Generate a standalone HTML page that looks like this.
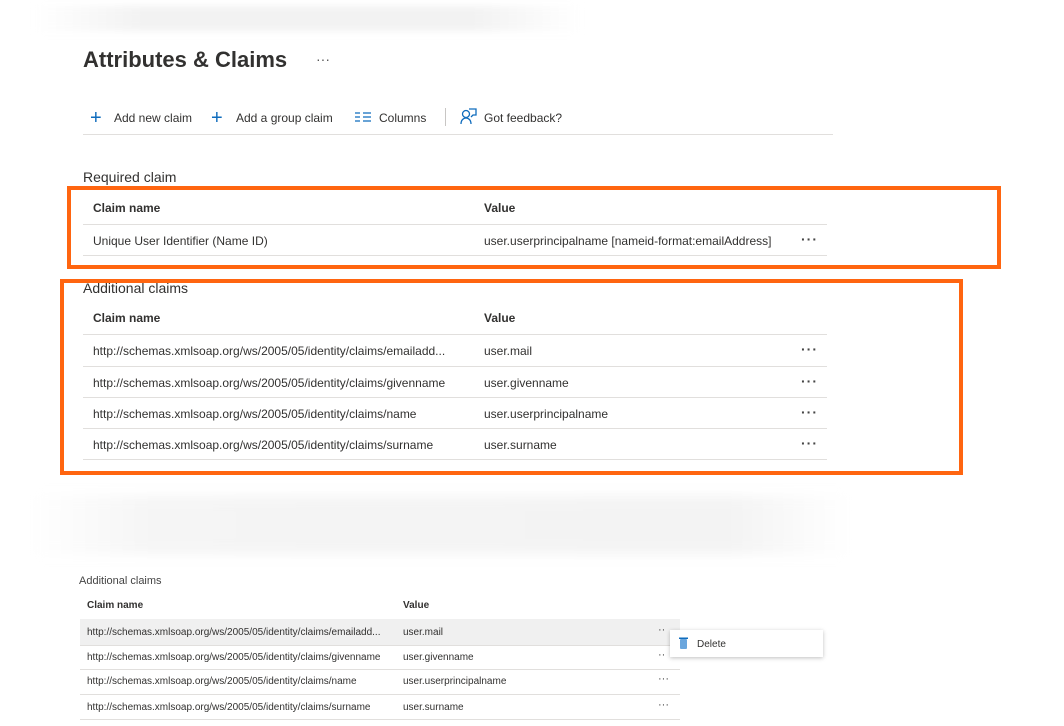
<!DOCTYPE html>
<html><head><meta charset="utf-8"><style>
*{margin:0;padding:0;box-sizing:border-box}
body{width:1064px;height:726px;background:#fff;position:relative;overflow:hidden;font-family:"Liberation Sans",sans-serif;color:#323130}
.a{position:absolute;white-space:nowrap}
.t{font-size:12px;line-height:14px}
.h{font-size:12px;font-weight:bold;line-height:14px}
.ln{position:absolute;height:1px;background:#e1dfdd}
.ob{position:absolute;border:4px solid #ff6510}
.dots{font-size:14px;letter-spacing:1px;font-weight:bold;color:#444}
.s{font-size:10px;line-height:12px}
.blue{color:#0f6cbd}
</style></head><body>
<div class="a" style="left:35px;top:6px;width:545px;height:25px;background:linear-gradient(90deg,#fff,#f2f2f2 20%,#f2f2f2 80%,#fff);filter:blur(4px)"></div>
<div class="a" style="left:83px;top:47px;font-size:22px;font-weight:bold;color:#323130">Attributes &amp; Claims</div>
<div class="a" style="left:316px;top:51px;font-size:14px;color:#555">···</div>

<div class="a blue" style="left:90px;top:107px;font-size:20px;font-weight:300">+</div>
<div class="a t" style="left:114px;top:111px">Add new claim</div>
<div class="a blue" style="left:211px;top:107px;font-size:20px;font-weight:300">+</div>
<div class="a t" style="left:236px;top:111px">Add a group claim</div>
<svg class="a" style="left:355px;top:112px" width="16" height="11"><path d="M0 1h5M0 5h5M0 9h5M8 1h8M8 5h8M8 9h8" stroke="#0f6cbd" stroke-width="1.3"/></svg>
<div class="a t" style="left:379px;top:111px">Columns</div>
<div class="a" style="left:445px;top:108px;width:1px;height:18px;background:#c8c6c4"></div>
<svg class="a" style="left:460px;top:108px" width="17" height="17"><circle cx="6" cy="6" r="3.5" fill="none" stroke="#0f6cbd" stroke-width="1.3"/><path d="M1 16c0-4 2.5-6 5-6s5 2 5 6M9 1h7v6h-3l-2 2" fill="none" stroke="#0f6cbd" stroke-width="1.3"/></svg>
<div class="a t" style="left:484px;top:111px">Got feedback?</div>
<div class="ln" style="left:83px;top:134px;width:750px"></div>

<div class="a" style="left:83px;top:169px;font-size:14px">Required claim</div>
<div class="ob" style="left:67px;top:186px;width:934px;height:83px"></div>
<div class="a h" style="left:93px;top:201px">Claim name</div>
<div class="a h" style="left:484px;top:201px">Value</div>
<div class="ln" style="left:83px;top:224px;width:744px"></div>
<div class="a t" style="left:93px;top:234px">Unique User Identifier (Name ID)</div>
<div class="a t" style="left:484px;top:234px">user.userprincipalname [nameid-format:emailAddress]</div>
<div class="a dots" style="left:801px;top:231px">···</div>
<div class="ln" style="left:83px;top:255px;width:744px"></div>

<div class="ob" style="left:60px;top:279px;width:903px;height:196px"></div>
<div class="a" style="left:83px;top:280px;font-size:14px">Additional claims</div>
<div class="a h" style="left:93px;top:311px">Claim name</div>
<div class="a h" style="left:484px;top:311px">Value</div>
<div class="ln" style="left:83px;top:334px;width:744px"></div>
<div class="a t" style="left:93px;top:344px">http://schemas.xmlsoap.org/ws/2005/05/identity/claims/emailadd...</div>
<div class="a t" style="left:484px;top:344px">user.mail</div>
<div class="a dots" style="left:801px;top:341px">···</div>
<div class="ln" style="left:83px;top:366px;width:744px"></div>
<div class="a t" style="left:93px;top:376px">http://schemas.xmlsoap.org/ws/2005/05/identity/claims/givenname</div>
<div class="a t" style="left:484px;top:376px">user.givenname</div>
<div class="a dots" style="left:801px;top:373px">···</div>
<div class="ln" style="left:83px;top:397px;width:744px"></div>
<div class="a t" style="left:93px;top:407px">http://schemas.xmlsoap.org/ws/2005/05/identity/claims/name</div>
<div class="a t" style="left:484px;top:407px">user.userprincipalname</div>
<div class="a dots" style="left:801px;top:404px">···</div>
<div class="ln" style="left:83px;top:428px;width:744px"></div>
<div class="a t" style="left:93px;top:438px">http://schemas.xmlsoap.org/ws/2005/05/identity/claims/surname</div>
<div class="a t" style="left:484px;top:438px">user.surname</div>
<div class="a dots" style="left:801px;top:435px">···</div>
<div class="ln" style="left:83px;top:459px;width:744px"></div>

<div class="a" style="left:30px;top:496px;width:820px;height:58px;background:linear-gradient(90deg,#fff,#f5f5f5 15%,#f3f3f3 85%,#fff);filter:blur(6px)"></div>

<div class="a" style="left:79px;top:575px;font-size:11px;color:#444">Additional claims</div>
<div class="a s" style="left:87px;top:600px;font-weight:bold">Claim name</div>
<div class="a s" style="left:403px;top:600px;font-weight:bold">Value</div>
<div class="a" style="left:80px;top:619px;width:600px;height:26px;background:#f0f0f0"></div>
<div class="a s" style="left:87px;top:627px">http://schemas.xmlsoap.org/ws/2005/05/identity/claims/emailadd...</div>
<div class="a s" style="left:403px;top:627px">user.mail</div>
<div class="a" style="left:658px;top:624px;font-size:11px;color:#444">··</div>
<div class="ln" style="left:80px;top:645px;width:600px"></div>
<div class="a s" style="left:87px;top:652px">http://schemas.xmlsoap.org/ws/2005/05/identity/claims/givenname</div>
<div class="a s" style="left:403px;top:652px">user.givenname</div>
<div class="a" style="left:658px;top:649px;font-size:11px;color:#444">··</div>
<div class="ln" style="left:80px;top:669px;width:600px"></div>
<div class="a s" style="left:87px;top:676px">http://schemas.xmlsoap.org/ws/2005/05/identity/claims/name</div>
<div class="a s" style="left:403px;top:676px">user.userprincipalname</div>
<div class="a" style="left:658px;top:673px;font-size:11px;color:#444">···</div>
<div class="ln" style="left:80px;top:694px;width:600px"></div>
<div class="a s" style="left:87px;top:702px">http://schemas.xmlsoap.org/ws/2005/05/identity/claims/surname</div>
<div class="a s" style="left:403px;top:702px">user.surname</div>
<div class="a" style="left:658px;top:699px;font-size:11px;color:#444">···</div>
<div class="ln" style="left:80px;top:719px;width:600px"></div>

<div class="a" style="left:670px;top:630px;width:153px;height:27px;background:#fff;box-shadow:0 1px 4px rgba(0,0,0,.25)"></div>
<svg class="a" style="left:679px;top:637px" width="9" height="12"><rect x="1" y="2" width="7" height="10" rx="1" fill="#6aa6dd"/><rect x="0" y="0.5" width="9" height="1.5" fill="#0f6cbd"/></svg>
<div class="a s" style="left:697px;top:639px">Delete</div>
</body></html>
